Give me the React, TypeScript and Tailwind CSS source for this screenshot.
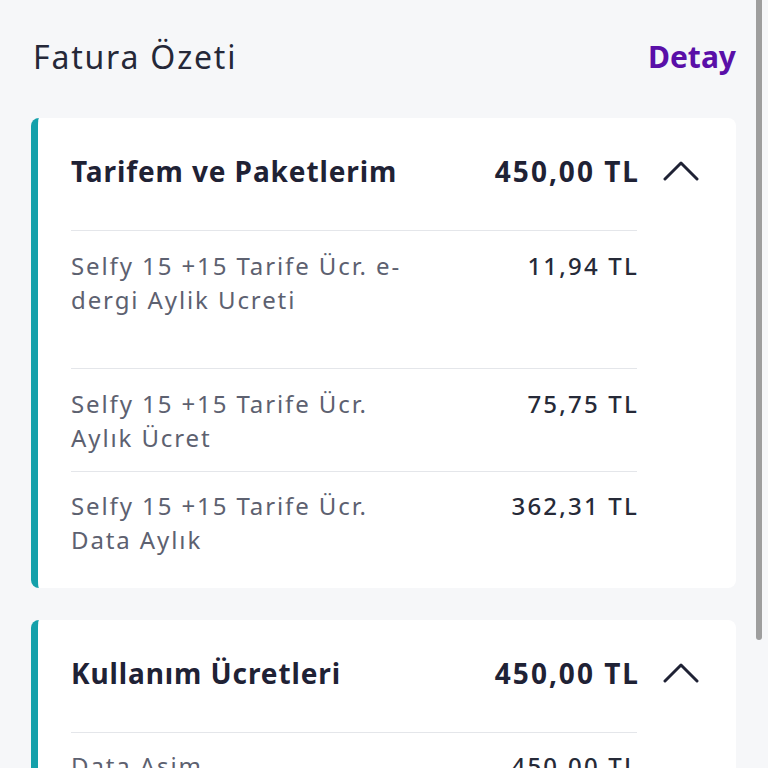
import React from "react";

type Row = { lines: string[]; amount: string; pad: string };

const TARIFF_ROWS: Row[] = [
  { lines: ["Selfy 15 +15 Tarife Ücr. e-", "dergi Aylik Ucreti"], amount: "11,94 TL", pad: "pt-[18px] pb-[51px]" },
  { lines: ["Selfy 15 +15 Tarife Ücr.", "Aylık Ücret"], amount: "75,75 TL", pad: "pt-[18px] pb-[16px]" },
  { lines: ["Selfy 15 +15 Tarife Ücr.", "Data Aylık"], amount: "362,31 TL", pad: "pt-[17px] pb-[31px]" },
];

const USAGE_ROWS: Row[] = [{ lines: ["Data Asim"], amount: "450,00 TL", pad: "pt-[16px] pb-[40px]" }];

function ChevronUp() {
  return (
    <svg width="36" height="22" viewBox="0 0 36 22" fill="none" className="shrink-0">
      <polyline points="2,19 18,3 34,19" stroke="#1f2235" strokeWidth="3" strokeLinecap="round" strokeLinejoin="round" />
    </svg>
  );
}

function BillCard({ title, total, rows }: { title: string; total: string; rows: Row[] }) {
  return (
    <div className="bg-white rounded-lg border-l-[7px] border-[#14a0aa] pl-[33px] pr-[99px]">
      <div className="flex items-center pt-[35px] pb-[41px] mr-[-62px]">
        <div className="flex-1 text-[28px] leading-[36px] font-bold tracking-[0.9px] text-[#1f2235]">{title}</div>
        <div className="text-[28px] leading-[36px] font-bold tracking-[2px] mr-[-2px] text-[#1f2235]">{total}</div>
        <div className="ml-[25px]">
          <ChevronUp />
        </div>
      </div>
      {rows.map((r, i) => (
        <div key={i} className={`flex justify-between border-t border-[#e4e6ea] ${r.pad}`}>
          <div className="text-[24px] leading-[34px] tracking-[1.9px] text-[#5d6170]">
            {r.lines.map((l) => (
              <div key={l} className="whitespace-nowrap">{l}</div>
            ))}
          </div>
          <div className="text-[24px] leading-[34px] font-medium tracking-[2.2px] mr-[-2px] text-[#262a38] whitespace-nowrap">
            {r.amount}
          </div>
        </div>
      ))}
    </div>
  );
}

export default function App() {
  return (
    <div className="relative h-[768px] overflow-hidden bg-[#f6f7f9] font-['Noto_Sans','Lato',sans-serif]">
      <div className="pl-[31px] pr-[32px]">
        <div className="flex items-center justify-between pt-[37px] pb-[41px]">
          <h1 className="pl-[2px] text-[32px] leading-[40px] tracking-[1.8px] text-[#252838]">Fatura Özeti</h1>
          <button className="text-[30px] leading-[40px] font-bold text-[#5a0fa8]">Detay</button>
        </div>
        <div className="flex flex-col gap-[32px]">
          <BillCard title="Tarifem ve Paketlerim" total="450,00 TL" rows={TARIFF_ROWS} />
          <BillCard title="Kullanım Ücretleri" total="450,00 TL" rows={USAGE_ROWS} />
        </div>
      </div>
      <div className="absolute top-0 right-[6px] w-[6px] h-[640px] rounded-b-full bg-[#9e9e9e]" />
    </div>
  );
}
